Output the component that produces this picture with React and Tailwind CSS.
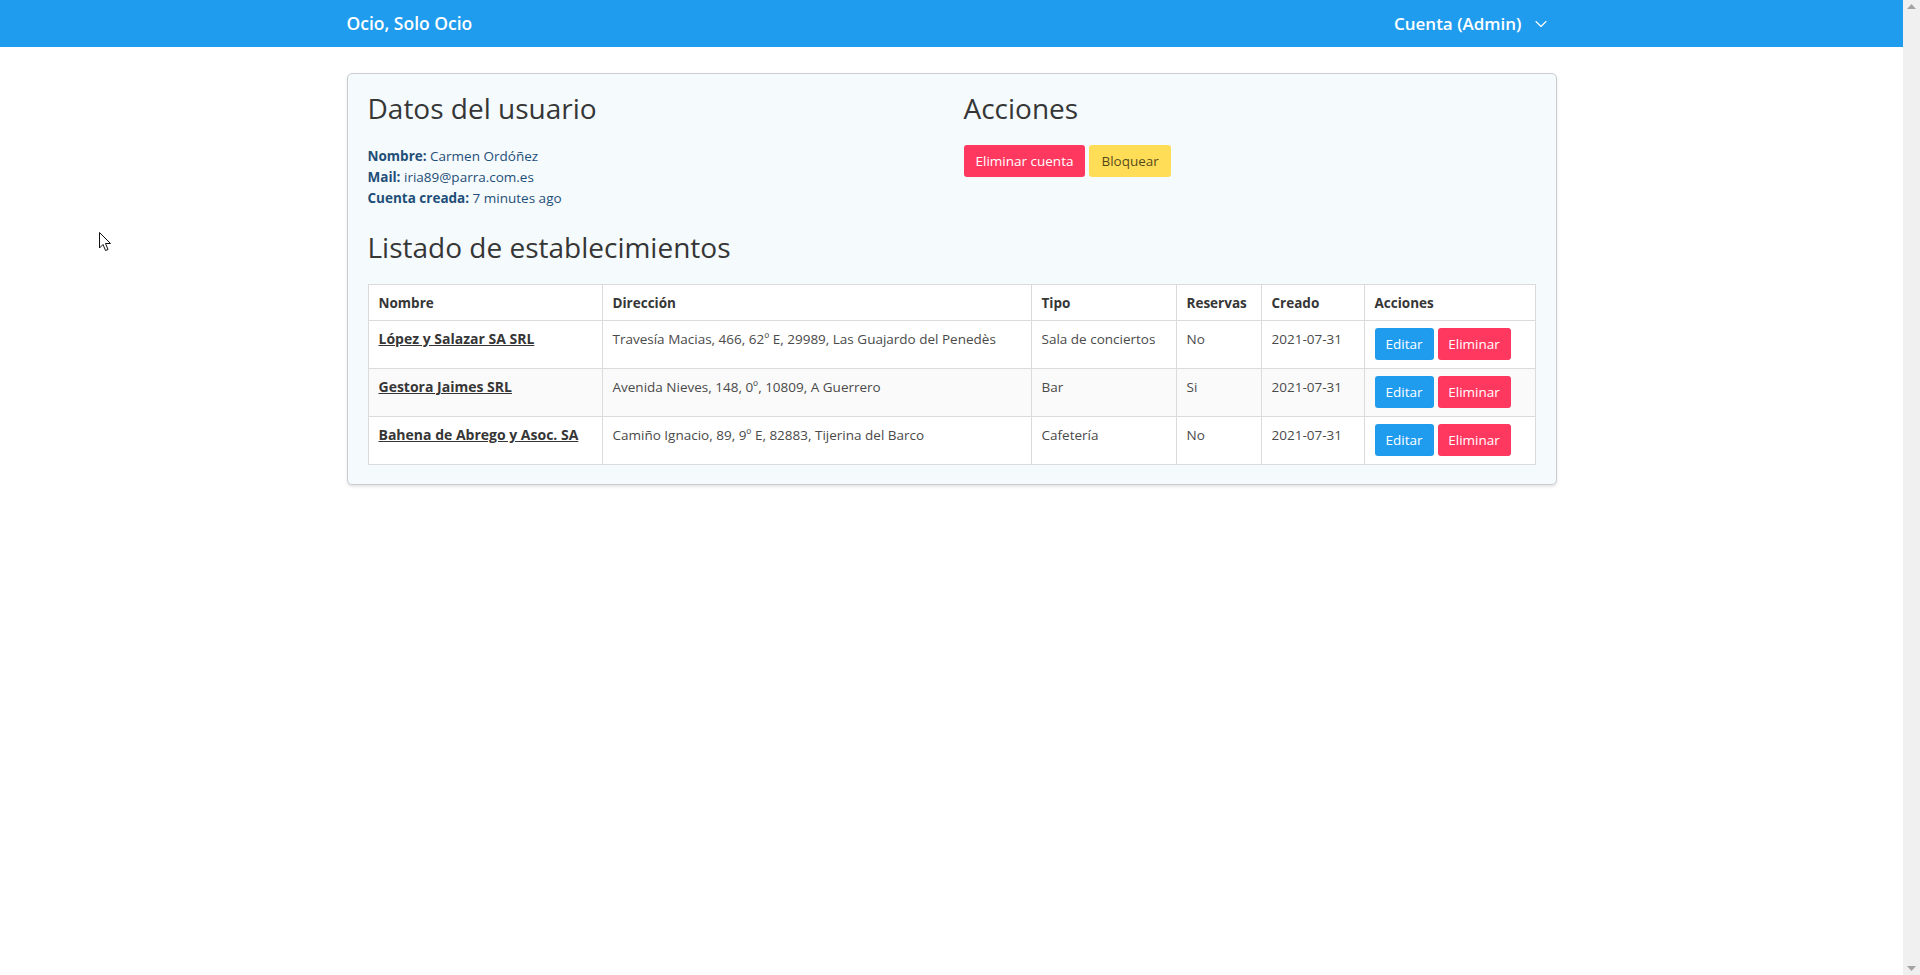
import { ChevronDown } from "lucide-react";

const font = { fontFamily: '"Open Sans", "Noto Sans", sans-serif' };

const rows = [
  { name: "López y Salazar SA SRL", dir: "Travesía Macias, 466, 62º E, 29989, Las Guajardo del Penedès", tipo: "Sala de conciertos", res: "No", created: "2021-07-31" },
  { name: "Gestora Jaimes SRL", dir: "Avenida Nieves, 148, 0º, 10809, A Guerrero", tipo: "Bar", res: "Si", created: "2021-07-31" },
  { name: "Bahena de Abrego y Asoc. SA", dir: "Camiño Ignacio, 89, 9º E, 82883, Tijerina del Barco", tipo: "Cafetería", res: "No", created: "2021-07-31" },
];

export default function App() {
  return (
    <div className="relative flex h-screen bg-white text-[#4a4a4a]" style={font}>
      <div className="flex-1">
        {/* Navbar */}
        <nav className="h-[47px] bg-[#209cee]">
          <div className="mx-auto flex h-full w-[1210px] items-center justify-between">
            <span className="text-[17.5px] font-semibold text-white">Ocio, Solo Ocio</span>
            <div className="flex items-center gap-[9px] pr-[6px] text-[17px] font-semibold text-white">
              <span>Cuenta (Admin)</span>
              <ChevronDown className="h-[20px] w-[20px]" strokeWidth={1.3} />
            </div>
          </div>
        </nav>

        {/* Card */}
        <div className="mx-auto mt-[26px] w-[1210px] rounded-[5px] border border-[#c9cdd1] bg-[#f5fafd] p-[20px] pb-[19px] shadow-[0_2px_3px_rgba(10,10,10,0.1)]">
          <div className="grid grid-cols-2 gap-[24px]">
            <div>
              <h3 className="-mt-[2px] text-[28px] leading-[32px] text-[#363636]">Datos del usuario</h3>
              <div className="mt-[22px] text-[13.5px] leading-[21px] text-[#1f4f78]">
                <p><b>Nombre:</b> Carmen Ordóñez</p>
                <p><b>Mail:</b> iria89@parra.com.es</p>
                <p><b>Cuenta creada:</b> 7 minutes ago</p>
              </div>
            </div>
            <div>
              <h3 className="-mt-[2px] text-[28px] leading-[32px] text-[#363636]">Acciones</h3>
              <div className="mt-[21px] flex gap-[4px]">
                <button className="h-[32px] rounded-[3px] bg-[#ff3860] px-[12px] text-[13.5px] text-white">Eliminar cuenta</button>
                <button className="h-[32px] rounded-[3px] bg-[#ffdd57] px-[12px] text-[13.5px] text-[rgba(0,0,0,0.7)]">Bloquear</button>
              </div>
            </div>
          </div>

          <h3 className="mt-[22px] text-[28px] leading-[32px] text-[#363636]">Listado de establecimientos</h3>

          <table className="mt-[21px] w-full border-collapse bg-white text-[13.5px] leading-[20px]">
            <thead>
              <tr className="h-[36px] text-left text-[#363636]">
                <th className="w-[234px] border border-[#dbdbdb] px-[10px] font-bold">Nombre</th>
                <th className="w-[429px] border border-[#dbdbdb] px-[10px] font-bold">Dirección</th>
                <th className="w-[145px] border border-[#dbdbdb] px-[10px] font-bold">Tipo</th>
                <th className="w-[85px] border border-[#dbdbdb] px-[10px] font-bold">Reservas</th>
                <th className="w-[103px] border border-[#dbdbdb] px-[10px] font-bold">Creado</th>
                <th className="border border-[#dbdbdb] px-[10px] font-bold">Acciones</th>
              </tr>
            </thead>
            <tbody>
              {rows.map((r, i) => (
                <tr key={r.name} className={i === 1 ? "h-[48px] bg-[#fafafa]" : "h-[48px] bg-white"}>
                  <td className="border border-[#dbdbdb] px-[10px] pt-[8px] align-top">
                    <a href="#" className="text-[14px] font-bold text-[#363636] underline">{r.name}</a>
                  </td>
                  <td className="border border-[#dbdbdb] px-[10px] pt-[8px] align-top">{r.dir}</td>
                  <td className="border border-[#dbdbdb] px-[10px] pt-[8px] align-top">{r.tipo}</td>
                  <td className="border border-[#dbdbdb] px-[10px] pt-[8px] align-top">{r.res}</td>
                  <td className="border border-[#dbdbdb] px-[10px] pt-[8px] align-top">{r.created}</td>
                  <td className="border border-[#dbdbdb] px-[10px] py-[7px] align-top">
                    <div className="flex gap-[4px]">
                      <button className="h-[32px] w-[59px] rounded-[3px] bg-[#209cee] text-[13.5px] text-white">Editar</button>
                      <button className="h-[32px] w-[73px] rounded-[3px] bg-[#ff3860] text-[13.5px] text-white">Eliminar</button>
                    </div>
                  </td>
                </tr>
              ))}
            </tbody>
          </table>
        </div>
      </div>

      {/* Scrollbar track */}
      <div className="flex w-[17px] flex-col items-center justify-between bg-[#f0f0f0] py-[4px]">
        <svg width="9" height="5" viewBox="0 0 9 5"><path d="M4.5 0 L9 5 L0 5 Z" fill="#a3a3a3" /></svg>
        <svg width="9" height="5" viewBox="0 0 9 5"><path d="M0 0 L9 0 L4.5 5 Z" fill="#a3a3a3" /></svg>
      </div>

      {/* Mouse pointer */}
      <svg className="absolute left-[99px] top-[232px]" width="13" height="20" viewBox="0 0 13 20">
        <path d="M0.5 0.5 L0.5 16 L4 12.5 L6.5 18.5 L9 17.5 L6.5 11.5 L11.5 11.5 Z" fill="#fff" stroke="#111" strokeWidth="1" strokeLinejoin="round" />
      </svg>
    </div>
  );
}
